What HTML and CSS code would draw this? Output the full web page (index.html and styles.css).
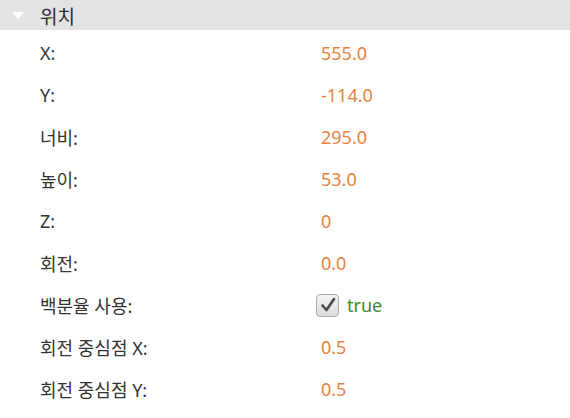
FILE: index.html
```html
<!DOCTYPE html>
<html lang="ko">
<head>
<meta charset="utf-8">
<link rel="stylesheet" href="styles.css">
</head>
<body>
<div class="panel">
  <div class="header">
    <svg class="tri" width="12" height="7" viewBox="0 0 12 7"><polygon points="0,0 12,0 6,7" fill="#ffffff"/></svg>
    <span class="title">위치</span>
  </div>
  <div class="rows">
    <div class="row"><span class="label">X:</span><span class="value">555.0</span></div>
    <div class="row"><span class="label">Y:</span><span class="value">-114.0</span></div>
    <div class="row"><span class="label">너비:</span><span class="value">295.0</span></div>
    <div class="row"><span class="label">높이:</span><span class="value">53.0</span></div>
    <div class="row"><span class="label">Z:</span><span class="value">0</span></div>
    <div class="row"><span class="label">회전:</span><span class="value">0.0</span></div>
    <div class="row"><span class="label">백분율 사용:</span><span class="value bool"><span class="check"><svg width="18" height="18" viewBox="0 0 18 18"><path d="M3.5 9.5 L7.5 14 L15 3" fill="none" stroke="#4a4a4a" stroke-width="2.6" stroke-linecap="round" stroke-linejoin="round"/></svg></span><span class="true">true</span></span></div>
    <div class="row"><span class="label">회전 중심점 X:</span><span class="value">0.5</span></div>
    <div class="row"><span class="label">회전 중심점 Y:</span><span class="value">0.5</span></div>
  </div>
</div>
</body>
</html>
```
FILE: styles.css
```css
html, body {
  margin: 0;
  padding: 0;
  background: #ffffff;
}
body {
  font-family: "Noto Sans", "Noto Sans CJK KR", sans-serif;
  color: #333333;
  width: 570px;
  height: 418px;
  overflow: hidden;
}
.header {
  height: 30px;
  background: #e3e3e3;
  display: flex;
  align-items: center;
}
.tri {
  margin-left: 12px;
  margin-right: 16px;
  flex: none;
}
.title {
  font-size: 19px;
  color: #2b2b2b;
  font-family: "Noto Sans CJK KR", sans-serif;
}
.rows {
  padding-top: 2px;
}
.row {
  height: 42px;
  display: grid;
  grid-template-columns: 321px 1fr;
  align-items: center;
  font-size: 18px;
}
.label {
  padding-left: 40px;
}
.value {
  color: #e8823e;
}
.bool {
  display: flex;
  align-items: center;
  margin-left: -5px;
}
.check {
  width: 23px;
  height: 23px;
  box-sizing: border-box;
  border: 1px solid #a9a9a9;
  border-radius: 4px;
  background: linear-gradient(#f4f4f4, #dcdcdc);
  display: flex;
  align-items: center;
  justify-content: center;
  margin-right: 8px;
}
.true {
  color: #3d8b1e;
}
```
